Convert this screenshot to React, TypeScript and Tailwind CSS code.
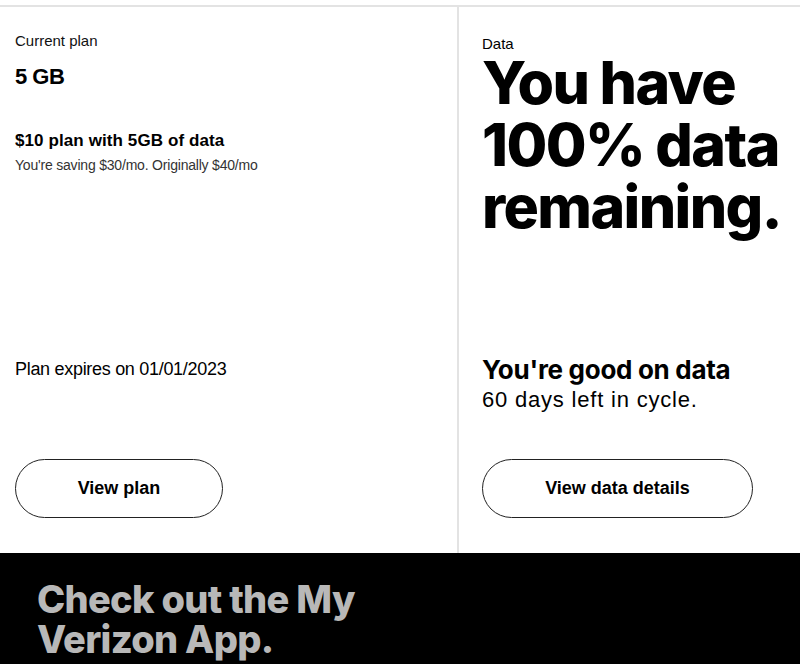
export default function App() {
  return (
    <div className="w-[800px] h-[664px] overflow-hidden bg-white font-['Liberation_Sans',Arial,sans-serif] text-black">
      <div className="h-[5px]" />
      <div className="flex h-[548px] border-t-2 border-[#e3e3e3]">
        <section className="flex w-[459px] flex-col border-r-2 border-[#e3e3e3] pl-[15px]">
          <p className="mt-[24px] text-[15px] leading-[20px] text-[#111]">Current plan</p>
          <p className="mt-[12px] text-[22px] font-bold leading-[28px] tracking-[-0.5px]">5 GB</p>
          <p className="mt-[39px] text-[17px] font-semibold leading-[22px] tracking-[0.1px]">$10 plan with 5GB of data</p>
          <p className="mt-[4px] text-[14px] leading-[18px] tracking-[-0.2px] text-[#333]">
            You're saving $30/mo. Originally $40/mo
          </p>
          <p className="mt-[184px] text-[18px] leading-[22px] tracking-[-0.3px]">Plan expires on 01/01/2023</p>
          <button
            type="button"
            className="mt-[79px] h-[59px] w-[208px] rounded-full border border-[#222] text-[18px] font-bold"
          >
            View plan
          </button>
        </section>

        <section className="flex flex-1 flex-col pl-[23px]">
          <p className="mt-[27px] text-[15px] leading-[20px]">Data</p>
          <h1 className="mt-[-2px] font-['Inter',sans-serif] text-[59px] font-extrabold leading-[62px] tracking-[-1.6px]">
            You have
            <br />
            100% data
            <br />
            remaining.
          </h1>
          <p className="mt-[117px] font-['Inter',sans-serif] text-[26px] font-bold leading-[30px] tracking-[-0.3px]">
            You're good on data
          </p>
          <p className="mt-[3px] text-[22px] leading-[24px] tracking-[0.8px]">60 days left in cycle.</p>
          <button
            type="button"
            className="mt-[47px] h-[59px] w-[271px] rounded-full border border-[#222] text-[18px] font-bold"
          >
            View data details
          </button>
        </section>
      </div>

      <div className="h-[111px] bg-black pl-[37px] pt-[26px]">
        <p className="font-['Inter',sans-serif] text-[38px] font-extrabold leading-[40px] tracking-[-0.7px] text-[#b8b8b8]">
          Check out the My
          <br />
          Verizon App.
        </p>
      </div>
    </div>
  );
}
